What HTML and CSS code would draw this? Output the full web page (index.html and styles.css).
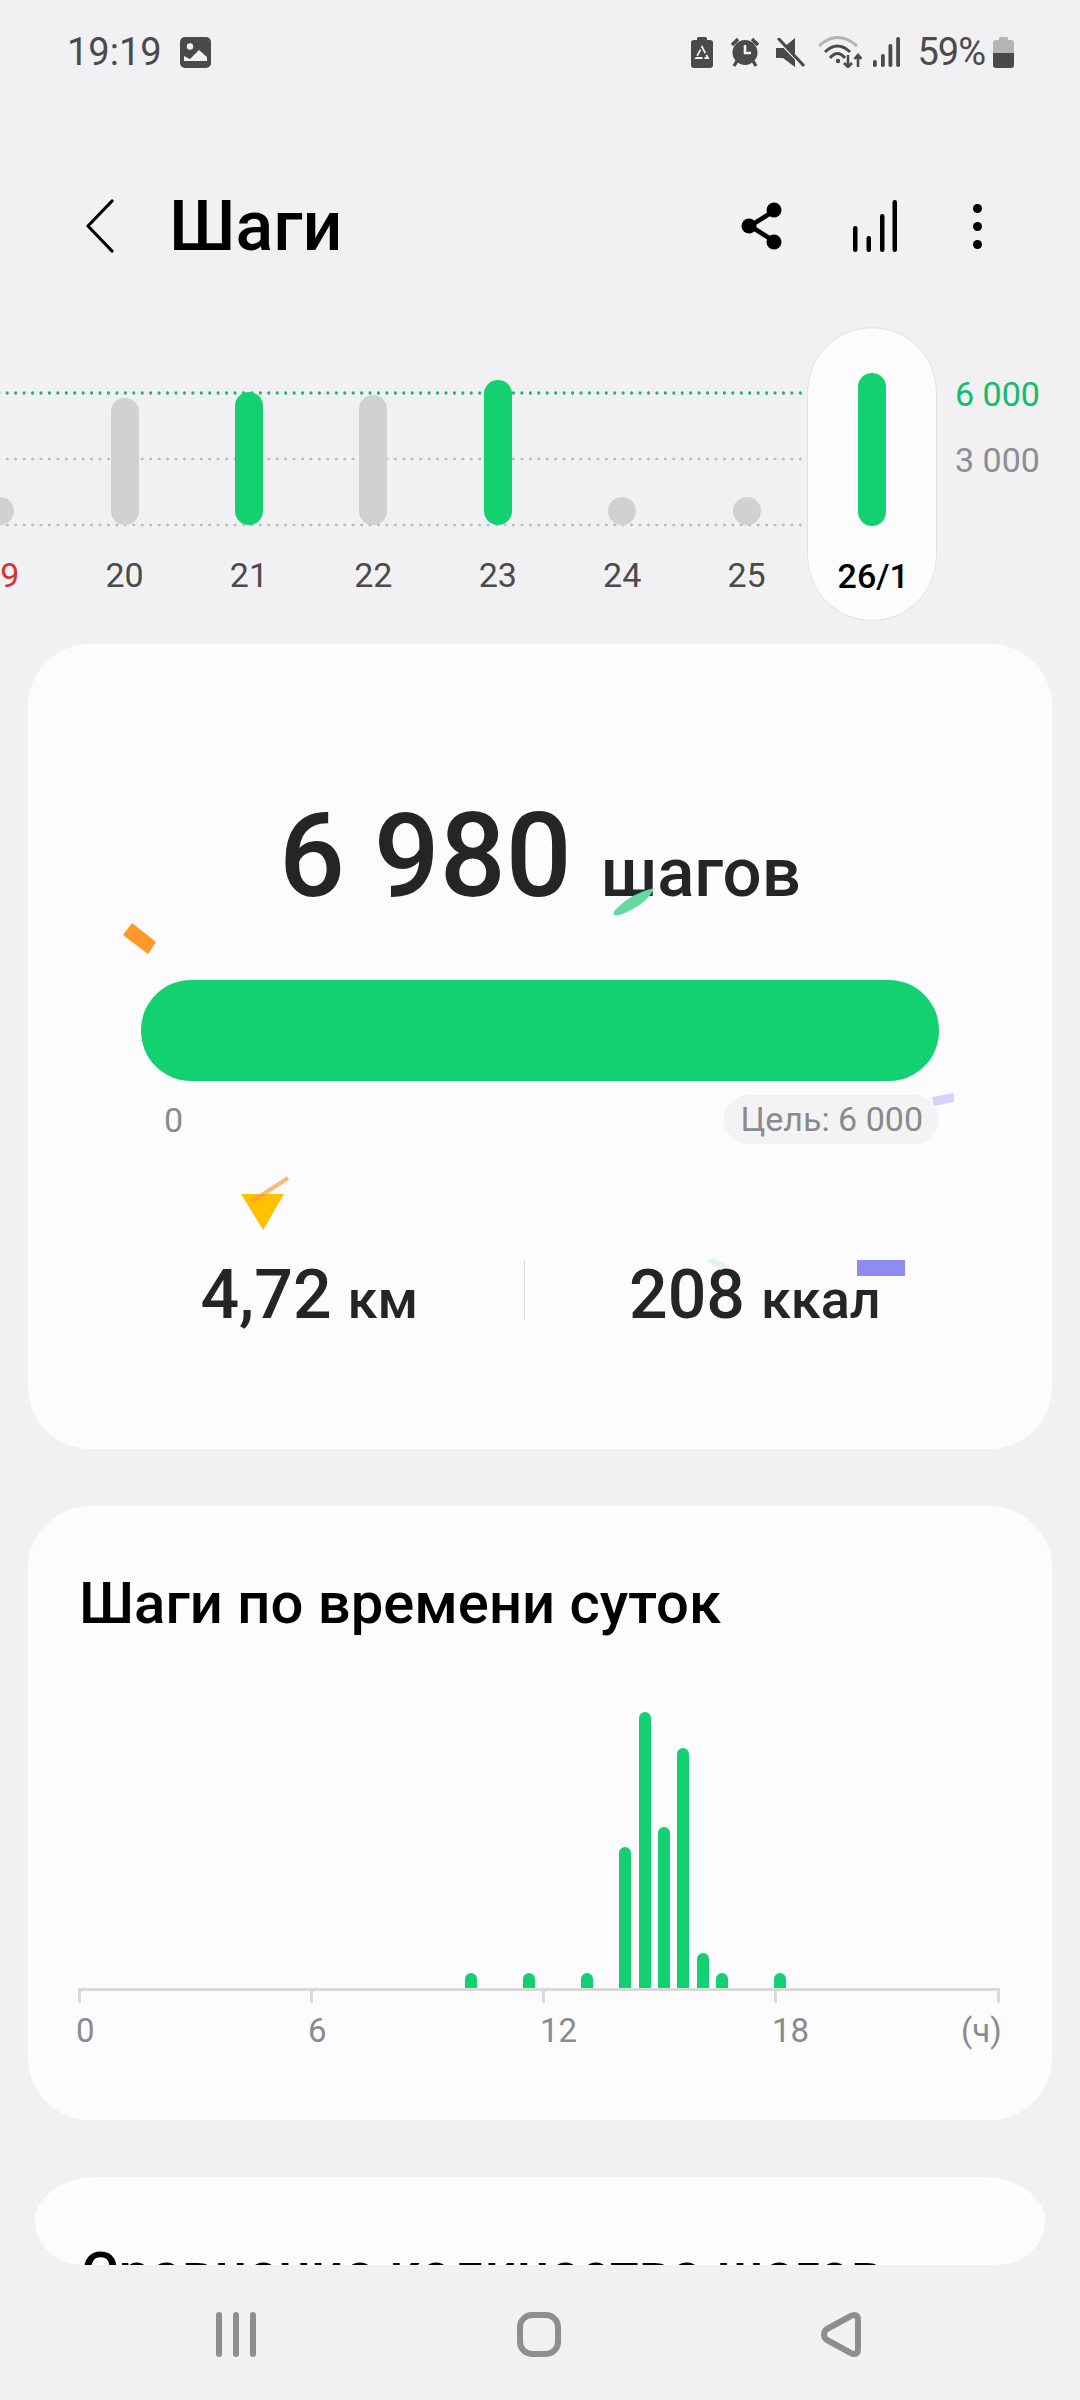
FILE: index.html
```html
<!DOCTYPE html>
<html lang="ru">
<head>
    <meta charset="UTF-8">
    <title>Шаги</title>
    <link rel="stylesheet" href="styles.css">
</head>
<body>
<div class="screen">

    <!-- Status bar -->
    <div class="status">
        <div class="status-left">
            <span class="clock">19:19</span>
            <svg class="ic" width="31" height="31" viewBox="0 0 31 31">
                <rect width="31" height="31" rx="5" fill="#4a4a4a"/>
                <circle cx="10" cy="9.500" r="3.200" fill="#f1f1f3"/>
                <path d="M4 24v-5l6 3 9-9 8 7v4z" fill="#f1f1f3"/>
            </svg>
        </div>
        <div class="status-right">
            <svg class="ic" width="22" height="31" viewBox="0 0 22 31">
                <path d="M6 3V1.500Q6 0 7.500 0h7Q16 0 16 1.500V3h3q3 0 3 3v22q0 3-3 3H3q-3 0-3-3V6q0-3 3-3z" fill="#4a4a4a"/>
                <path d="M11 10L17 21H5Z" stroke="#f1f1f3" stroke-width="1.800" fill="none" stroke-dasharray="7 2"/>
            </svg>
            <svg class="ic alarm" width="30" height="30" viewBox="0 0 30 30" fill="none">
                <path d="M2 8L8 2M28 8L22 2M7 24l-3 5M23 24l3 5" stroke="#4a4a4a" stroke-width="3.400"/>
                <circle cx="15" cy="15.500" r="12.500" fill="#4a4a4a"/>
                <path d="M15 8v8h6" stroke="#f1f1f3" stroke-width="2.600"/>
            </svg>
            <svg class="ic mute" width="30" height="29" viewBox="0 0 30 29">
                <path d="M1 10h7L20 0v29L8 20H1z" fill="#4a4a4a"/>
                <path d="M0-1l28 29" stroke="#f1f1f3" stroke-width="3"/>
                <path d="M3 0l26 28" stroke="#4a4a4a" stroke-width="3"/>
            </svg>
            <svg class="ic wifi" width="44" height="32" viewBox="0 0 44 32" fill="none">
                <path d="M1 10Q19.500-7 39 10" stroke="#b4b4b4" stroke-width="3"/>
                <path d="M7 16Q19.500 4 32 16" stroke="#4a4a4a" stroke-width="3"/>
                <path d="M12 22Q19.500 13 27 22" stroke="#4a4a4a" stroke-width="3"/>
                <circle cx="20" cy="25" r="2.200" fill="#4a4a4a"/>
                <path d="M30 19v12M26 27l4 4 4-4M40 31V19M36.500 23l3.500-4 3.500 4" stroke="#4a4a4a" stroke-width="2.600"/>
            </svg>
            <svg class="ic signal" width="27" height="30" viewBox="0 0 27 30">
                <rect x="0" y="23" width="3.800" height="7" rx="1.800" fill="#4a4a4a"/>
                <rect x="8" y="17" width="3.800" height="13" rx="1.800" fill="#4a4a4a"/>
                <rect x="15.500" y="7" width="3.800" height="23" rx="1.800" fill="#4a4a4a"/>
                <rect x="23.200" y="0" width="3.800" height="30" rx="1.800" fill="#4a4a4a"/>
            </svg>
            <span class="percent">59%</span>
            <svg class="ic" width="21" height="31" viewBox="0 0 21 31">
                <path d="M6 3V1.500Q6 0 7.500 0h6Q15 0 15 1.500V3h3q3 0 3 3v10H0V6q0-3 3-3z" fill="#b4b4b4"/>
                <path d="M0 16h21v12q0 3-3 3H3q-3 0-3-3z" fill="#4a4a4a"/>
            </svg>
        </div>
    </div>

    <!-- App bar -->
    <header class="appbar">
        <svg class="back" width="28" height="54" viewBox="0 0 28 54" fill="none">
            <path d="M26 2L2 27l24 25" stroke="#000" stroke-width="3.200" stroke-linecap="round" stroke-linejoin="round"/>
        </svg>
        <h1>Шаги</h1>
        <div class="actions">
            <svg class="share" width="42" height="48" viewBox="0 0 42 48" fill="none">
                <path d="M33 9L9 24l24 15" stroke="#000" stroke-width="4.500"/>
                <circle cx="33" cy="8" r="7.500" fill="#000"/>
                <circle cx="8" cy="24" r="7.500" fill="#000"/>
                <circle cx="33" cy="40" r="7.500" fill="#000"/>
            </svg>
            <svg class="stats" width="44" height="52" viewBox="0 0 44 52">
                <rect x="0" y="26" width="4.500" height="26" rx="2.200"/>
                <rect x="13.500" y="36" width="4.500" height="16" rx="2.200"/>
                <rect x="27" y="14" width="4.500" height="38" rx="2.200"/>
                <rect x="39.500" y="0" width="4.500" height="52" rx="2.200"/>
            </svg>
            <div class="more"><i></i><i></i><i></i></div>
        </div>
    </header>

    <!-- Last days chart -->
    <section class="week">
        <div class="line line-goal"></div>
        <div class="line line-mid"></div>
        <div class="line line-zero"></div>
        <div class="days">
            <div class="day red"><div class="slot"><b class="bar" style="height:28px"></b></div><span>19</span></div>
            <div class="day"><div class="slot"><b class="bar" style="height:127px"></b></div><span>20</span></div>
            <div class="day"><div class="slot"><b class="bar done" style="height:133px"></b></div><span>21</span></div>
            <div class="day"><div class="slot"><b class="bar" style="height:130px"></b></div><span>22</span></div>
            <div class="day"><div class="slot"><b class="bar done" style="height:145px"></b></div><span>23</span></div>
            <div class="day"><div class="slot"><b class="bar" style="height:28px"></b></div><span>24</span></div>
            <div class="day"><div class="slot"><b class="bar" style="height:28px"></b></div><span>25</span></div>
            <div class="day today"><div class="slot"><b class="bar done" style="height:153px"></b></div><span>26/1</span></div>
        </div>
        <div class="week-scale">
            <span class="goal">6 000</span>
            <span>3 000</span>
        </div>
    </section>

    <!-- Today -->
    <section class="card card-today">
        <div class="total"><span class="total-num">6 980</span><span class="total-unit">шагов</span></div>
        <div class="progress"></div>
        <div class="progress-scale">
            <span>0</span>
            <span class="chip">Цель: 6 000</span>
        </div>
        <div class="summary">
            <div class="summary-item"><strong>4,72</strong> <span>км</span></div>
            <div class="summary-item"><strong>208</strong> <span>ккал</span></div>
        </div>
        <!-- confetti, coordinates relative to the card -->
        <svg class="confetti" width="1024" height="805" viewBox="0 0 1024 805">
            <path d="M95 291l9-12 24 19-8 12z" fill="#ff9826"/>
            <path d="M626 244q-6 16-34 27-10 2-5-5 16-17 39-22z" fill="#66d9a0"/>
            <path d="M904 453l22-4v9l-20 4z" fill="#d4d4fa"/>
            <path d="M213 550h43l-21 36z" fill="#ffc000"/>
            <path d="M260 534l-37 24" stroke="#ff9a3c" stroke-opacity=".7" stroke-width="4"/>
            <path d="M678 617l7-3 15 8-7 4z" fill="#dff5ec"/>
            <path d="M829 616h48v16h-48z" fill="#8f8bf0"/>
        </svg>
    </section>

    <!-- By time of day -->
    <section class="card card-hours">
        <h2>Шаги по времени суток</h2>
        <div class="hours">
            <b style="grid-column:21;height:15px"></b>
            <b style="grid-column:24;height:15px"></b>
            <b style="grid-column:27;height:15px"></b>
            <b style="grid-column:29;height:141px"></b>
            <b style="grid-column:30;height:276px"></b>
            <b style="grid-column:31;height:161px"></b>
            <b style="grid-column:32;height:240px"></b>
            <b style="grid-column:33;height:35px"></b>
            <b style="grid-column:34;height:15px"></b>
            <b style="grid-column:37;height:15px"></b>
        </div>
        <div class="ticks"><i></i><i></i><i></i><i></i></div>
        <div class="hour-labels">
            <span>0</span><span>6</span><span>12</span><span>18</span><span class="unit">(ч)</span>
        </div>
    </section>

    <!-- Next card, scrolled under the nav bar -->
    <section class="card card-next">
        <h2>Сравнение количества шагов</h2>
    </section>

    <!-- Nav bar -->
    <nav class="navbar">
        <svg width="40" height="45" viewBox="0 0 40 45">
            <rect x="0" width="6" height="45" rx="3"/>
            <rect x="17" width="6" height="45" rx="3"/>
            <rect x="34" width="6" height="45" rx="3"/>
        </svg>
        <svg width="44" height="45" viewBox="0 0 44 45" fill="none">
            <rect x="3" y="3" width="38" height="39" rx="12" class="stroke"/>
        </svg>
        <svg width="40" height="45" viewBox="0 0 40 45" fill="none">
            <path d="M37 8Q37 3 33 3Q31 3 28 5L6 17Q3 19 3 22.500Q3 26 6 28L28 40Q31 42 33 42Q37 42 37 37Z" class="stroke" stroke-linejoin="round"/>
        </svg>
    </nav>
</div>
</body>
</html>
```

FILE: styles.css
```css
* {
    box-sizing: border-box;
}
body {
    margin: 0;
    font-family: Roboto, "Noto Sans", sans-serif;
    background-color: #f1f1f3;
}
.screen {
    width: 1080px;
    height: 2400px;
    overflow: hidden;
    background-color: #f1f1f3;
}
.ic {
    display: block;
    flex: none;
}

/* Status bar */
.status {
    height: 104px;
    padding: 0 66px 0 67px;
    display: flex;
    justify-content: space-between;
    align-items: center;
    color: #4a4a4a;
    font-size: 38px;
}
.status-left,
.status-right {
    display: flex;
    align-items: center;
}
.status-left .ic {
    margin-left: 18px;
}
.status-right .alarm {
    margin-left: 17px;
}
.status-right .mute {
    margin-left: 15px;
}
.status-right .wifi {
    margin-left: 13px;
}
.status-right .signal {
    margin-left: 11px;
}
.percent {
    margin: 0 8px 0 17px;
    letter-spacing: -1px;
}

/* App bar */
.appbar {
    margin-top: 52px;
    height: 140px;
    padding: 0 98px 0 86px;
    display: flex;
    align-items: center;
}
.back {
    flex: none;
}
.appbar h1 {
    margin: 0 0 0 55px;
    font-size: 70px;
    font-weight: 500;
    color: #000;
}
.actions {
    margin-left: auto;
    display: flex;
    align-items: center;
}
.stats {
    margin-left: 70px;
}
.more {
    margin-left: 76px;
    display: flex;
    flex-direction: column;
    gap: 9px;
}
.more i {
    display: block;
    width: 9px;
    height: 9px;
    border-radius: 50%;
    background-color: #000;
}

/* Last days chart */
.week {
    position: relative;
    margin-top: 31px;
    height: 294px;
    display: flex;
}
.line {
    position: absolute;
    left: 0;
    width: 804px;
    height: 4px;
    background-image: radial-gradient(circle at center, #bcbcbe 1.2px, transparent 1.7px);
    background-size: 8.45px 4px;
    background-position: 3px 0;
}
.line-goal {
    top: 64px;
    background-image: radial-gradient(circle at center, #12b96a 1.4px, transparent 1.9px);
}
.line-mid {
    top: 130px;
}
.line-zero {
    top: 196px;
}
.days {
    position: relative;
    margin-left: -62px;
    display: flex;
}
.day {
    width: 124.4px;
    display: flex;
    flex-direction: column;
    align-items: center;
    font-size: 34px;
    color: #4a4a4a;
}
.slot {
    height: 198px;
    display: flex;
    align-items: flex-end;
}
.day span {
    margin-top: 30px;
    line-height: 40px;
}
.red {
    color: #d4342f;
}
.today {
    width: 130px;
    margin-left: -2px;
    background-color: #fcfcfd;
    border: 1px solid #e2e2e4;
    border-radius: 65px;
    color: #000;
    font-weight: 500;
}
.today span {
    margin-left: 3px;
}
.bar {
    display: block;
    width: 28px;
    border-radius: 14px;
    background-color: #d1d1d1;
}
.bar.done {
    background-color: #13d170;
}
.week-scale {
    position: absolute;
    left: 955px;
    top: 47px;
    display: flex;
    flex-direction: column;
    gap: 26px;
    font-size: 34px;
    line-height: 40px;
    color: #8e8e90;
}
.goal {
    color: #10bd68;
}

/* Cards */
.card {
    margin: 23px 28px 0;
    background-color: #fcfcfe;
    border-radius: 62px;
    position: relative;
}
.card h2 {
    margin: 0;
    font-size: 58px;
    font-weight: 500;
    color: #000;
}

/* Today */
.card-today {
    height: 805px;
    padding: 0 113px;
}
.total {
    padding-top: 142px;
    height: 336px;
    display: flex;
    justify-content: center;
    align-items: baseline;
    color: #252527;
    font-weight: 500;
}
.total-num {
    font-size: 116px;
    line-height: 140px;
}
.total-unit {
    margin-left: 29px;
    font-size: 69px;
}
.progress {
    height: 101px;
    border-radius: 50px;
    background-color: #13d170;
}
.progress-scale {
    margin-top: 14px;
    display: flex;
    justify-content: space-between;
    align-items: center;
    font-size: 34px;
    color: #8a8a8e;
}
.progress-scale span:first-child {
    padding-left: 23px;
}
.chip {
    padding: 0 16px;
    height: 49px;
    line-height: 49px;
    border-radius: 25px;
    background-color: #f3f3f4;
}
.summary {
    margin: 116px -113px 0;
    display: grid;
    grid-template-columns: 496px 1fr;
    color: #252527;
    font-weight: 500;
}
.summary-item {
    height: 61px;
    padding-right: 106px;
    display: flex;
    justify-content: flex-end;
    align-items: baseline;
    gap: 16px;
    line-height: 70px;
    font-size: 54px;
}
.summary-item strong {
    font-weight: 500;
    font-size: 68px;
}
.summary-item + .summary-item {
    padding: 0 0 0 104px;
    justify-content: flex-start;
    border-left: 1px solid #dcdcde;
}
.confetti {
    position: absolute;
    left: 0;
    top: 0;
}

/* By time of day */
.card-hours {
    margin-top: 57px;
    height: 614px;
    padding: 63px 52px 0 50px;
}
.card-hours h2 {
    margin-left: 1px;
}
.hours {
    height: 354px;
    display: grid;
    grid-template-columns: repeat(48, 19.33px);
    align-items: end;
    border-bottom: 3px solid #d9d9d9;
}
.hours b {
    display: block;
    grid-row: 1;
    width: 12px;
    border-radius: 6px 6px 0 0;
    background-color: #13d170;
}
.ticks {
    height: 12px;
    display: flex;
    border-right: 3px solid #d9d9d9;
}
.ticks i {
    display: block;
    flex: none;
    width: 232px;
    height: 12px;
    border-left: 3px solid #d9d9d9;
}
.ticks i:last-child {
    width: 221px;
}
.hour-labels {
    margin: 8px 0 0 -2px;
    display: flex;
    font-size: 33px;
    line-height: 40px;
    color: #8a8a8e;
}
.hour-labels span {
    flex: none;
    width: 232px;
}
.hour-labels .unit {
    width: auto;
    margin-left: -43px;
}

/* Next card */
.card-next {
    margin: 57px 35px 0;
    height: 88px;
    border-radius: 62px 62px 48px 48px / 44px;
    overflow: hidden;
}
.card-next h2 {
    position: absolute;
    left: 46px;
    top: 63px;
    font-size: 57.500px;
    white-space: nowrap;
}

/* Nav bar */
.navbar {
    margin-top: 47px;
    padding: 0 219px 0 216px;
    display: flex;
    justify-content: space-between;
}
.navbar svg {
    fill: #8c8f8f;
}
.stroke {
    fill: none;
    stroke: #8c8f8f;
    stroke-width: 6;
}
```
